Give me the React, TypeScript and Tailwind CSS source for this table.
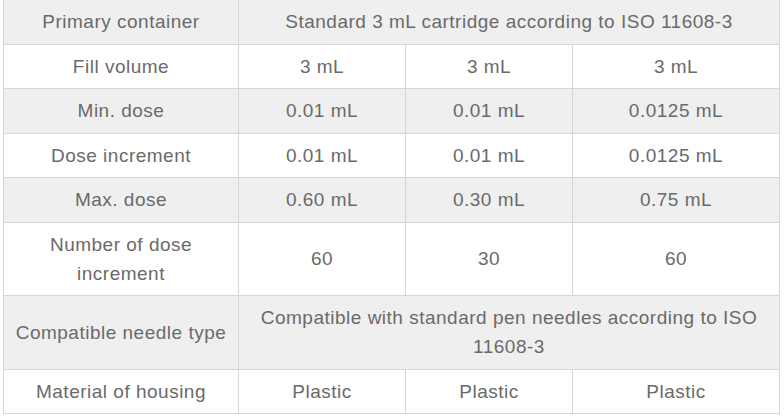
import React from 'react'

type Row = { label: string; values: string[]; shaded: boolean }

const rows: Row[] = [
  { label: 'Primary container', values: ['Standard 3 mL cartridge according to ISO 11608-3'], shaded: true },
  { label: 'Fill volume', values: ['3 mL', '3 mL', '3 mL'], shaded: false },
  { label: 'Min. dose', values: ['0.01 mL', '0.01 mL', '0.0125 mL'], shaded: true },
  { label: 'Dose increment', values: ['0.01 mL', '0.01 mL', '0.0125 mL'], shaded: false },
  { label: 'Max. dose', values: ['0.60 mL', '0.30 mL', '0.75 mL'], shaded: true },
  { label: 'Number of dose increment', values: ['60', '30', '60'], shaded: false },
  { label: 'Compatible needle type', values: ['Compatible with standard pen needles according to ISO 11608-3'], shaded: true },
  { label: 'Material of housing', values: ['Plastic', 'Plastic', 'Plastic'], shaded: false },
]

const cell =
  'border border-[#d6d6d6] px-2 py-[7.25px] text-center align-middle leading-[29px]'

const App = () => {
  return (
    <div className="w-[784px] h-[416px] overflow-hidden bg-white pl-[3px]">
      <table
        className="table-fixed border-collapse w-[776px] text-[19px] tracking-[0.5px] text-[#6a6a6a]"
        style={{ fontFamily: '"Liberation Sans", Arial, sans-serif' }}
      >
        <colgroup>
          <col className="w-[235px]" />
          <col className="w-[167px]" />
          <col className="w-[167px]" />
          <col className="w-[207px]" />
        </colgroup>
        <tbody>
          {rows.map((row, i) => (
            <tr key={row.label} className={row.shaded ? 'bg-[#efefef]' : 'bg-white'}>
              <td className={`${cell} ${i === 0 ? 'border-t-0' : ''}`}>{row.label}</td>
              {row.values.length === 1 ? (
                <td colSpan={3} className={`${cell} ${i === 0 ? 'border-t-0' : ''}`}>
                  {row.values[0]}
                </td>
              ) : (
                row.values.map((v, j) => (
                  <td key={j} className={cell}>
                    {v}
                  </td>
                ))
              )}
            </tr>
          ))}
        </tbody>
      </table>
    </div>
  )
}

export default App
